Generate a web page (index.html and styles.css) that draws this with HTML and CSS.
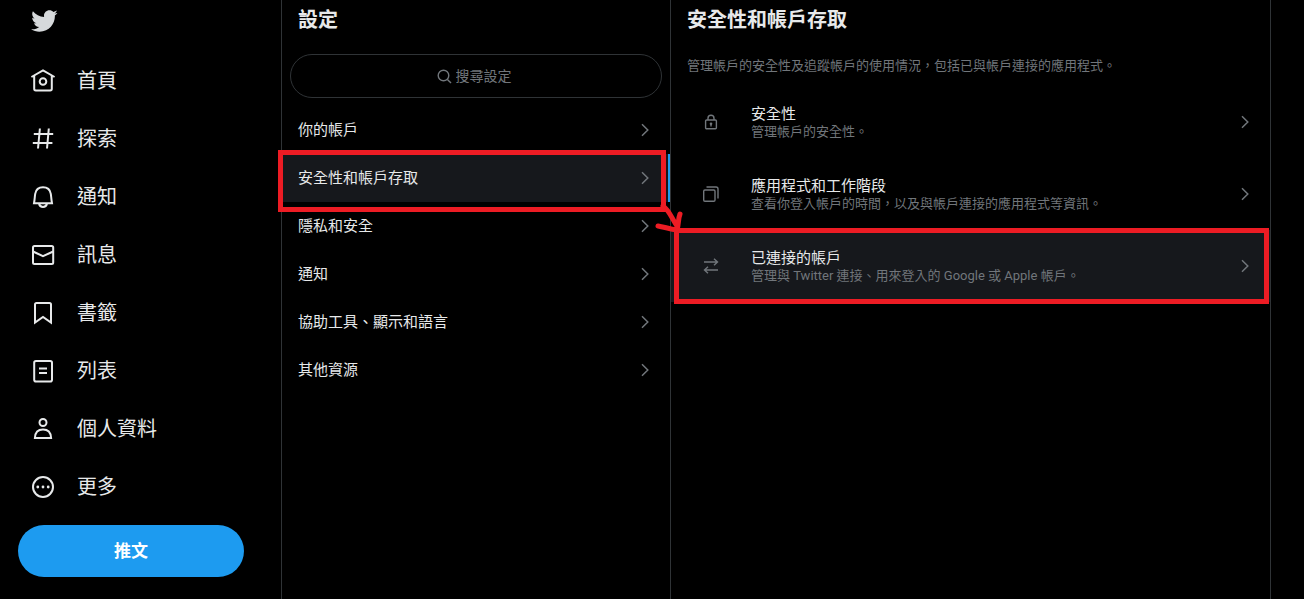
FILE: index.html
```html
<!DOCTYPE html>
<html lang="zh-Hant">
<head>
<meta charset="utf-8">
<meta name="viewport" content="width=device-width, initial-scale=1">
<title>設定</title>
<link rel="stylesheet" href="styles.css">
</head>
<body>
<svg class="sprite" aria-hidden="true">
  <symbol id="chevron" viewBox="0 0 18 18"><path d="M6 3.2 11.8 9 6 14.8"/></symbol>
</svg>
<div class="layout">
  <header class="sidebar">
    <a class="logo" href="#" aria-label="Twitter">
      <svg viewBox="0 0 24 24"><path d="M23.643 4.937c-.835.37-1.732.62-2.675.733.962-.576 1.7-1.49 2.048-2.578-.9.534-1.897.922-2.958 1.13-.85-.904-2.06-1.47-3.4-1.47-2.572 0-4.658 2.086-4.658 4.66 0 .364.042.718.12 1.06-3.873-.195-7.304-2.05-9.602-4.868-.4.69-.63 1.49-.63 2.342 0 1.616.823 3.043 2.072 3.878-.764-.025-1.482-.234-2.11-.583v.06c0 2.257 1.605 4.14 3.737 4.568-.392.106-.803.162-1.227.162-.3 0-.593-.028-.877-.082.593 1.85 2.313 3.198 4.352 3.234-1.595 1.25-3.604 1.995-5.786 1.995-.376 0-.747-.022-1.112-.065 2.062 1.323 4.51 2.093 7.14 2.093 8.57 0 13.255-7.098 13.255-13.254 0-.2-.005-.402-.014-.602.91-.658 1.7-1.477 2.323-2.41z"/></svg>
    </a>
    <nav class="nav">
      <a href="#"><svg viewBox="0 0 26 26"><path d="M1.4 9 13 2.500 24.600 9M4.200 8V20.800q0 1.600 1.600 1.600H20.200q1.600 0 1.600-1.600V8"/><circle cx="13" cy="13.500" r="3.300"/></svg>首頁</a>
      <a href="#"><svg viewBox="0 0 26 26"><path d="M9.900 2.500 8 22.500M18.800 2.500 17 22.500M3.800 8H23.200M2.800 17H22.400"/></svg>探索</a>
      <a href="#"><svg viewBox="0 0 26 26"><path d="M4 19.200C4.800 15 4.700 13 5.200 9.800 5.900 5.800 9 3.300 13 3.300s7.100 2.500 7.800 6.500C21.300 13 21.200 15 22 19.200ZM9 19.500c.5 2.400 2 3.600 4 3.600s3.500-1.200 4-3.600"/></svg>通知</a>
      <a href="#"><svg viewBox="0 0 26 26"><rect x="3" y="4" width="20.200" height="18" rx="1.500"/><path d="M3 9.500 13 14.200 23.200 9.500"/></svg>訊息</a>
      <a href="#"><svg viewBox="0 0 26 26"><path d="M5 22.600V4.500Q5 3 6.500 3h13Q21 3 21 4.500V22.600L13 17Z"/></svg>書籤</a>
      <a href="#"><svg viewBox="0 0 26 26"><rect x="4.200" y="3" width="17.800" height="20.500" rx="1.800"/><path d="M9 10.500h8M9 15h8"/></svg>列表</a>
      <a href="#"><svg viewBox="0 0 26 26"><circle cx="13" cy="6.500" r="3.500"/><path d="M4.900 22c.3-5.600 3.300-8.400 8.100-8.400s7.800 2.800 8.100 8.400Z"/></svg>個人資料</a>
      <a href="#"><svg viewBox="0 0 26 26"><circle cx="13" cy="13" r="10"/><g class="dots"><circle cx="7.800" cy="13" r="1.400"/><circle cx="13" cy="13" r="1.400"/><circle cx="18.200" cy="13" r="1.400"/></g></svg>更多</a>
    </nav>
    <button class="tweet" type="button">推文</button>
  </header>

  <section class="settings">
    <h2>設定</h2>
    <label class="search">
      <svg viewBox="0 0 15 15" aria-hidden="true"><circle cx="6.500" cy="6.500" r="5.300"/><path d="M10.400 10.400 14 14"/></svg>
      <input type="text" placeholder="搜尋設定" aria-label="搜尋設定">
    </label>
    <nav class="menu">
      <a href="#">你的帳戶<svg class="chevron"><use href="#chevron"/></svg></a>
      <a href="#" class="active" aria-current="page">安全性和帳戶存取<svg class="chevron"><use href="#chevron"/></svg>
        <span class="mark mark-menu"></span>
        <svg class="arrow" viewBox="0 0 32 32" aria-hidden="true"><path d="M9 4C15 8 17 15 23 24M26 12C24 17 25 21 23 28M4 24C10 25 16 27 23 28"/></svg>
      </a>
      <a href="#">隱私和安全<svg class="chevron"><use href="#chevron"/></svg></a>
      <a href="#">通知<svg class="chevron"><use href="#chevron"/></svg></a>
      <a href="#">協助工具、顯示和語言<svg class="chevron"><use href="#chevron"/></svg></a>
      <a href="#">其他資源<svg class="chevron"><use href="#chevron"/></svg></a>
    </nav>
  </section>

  <main class="detail">
    <h2>安全性和帳戶存取</h2>
    <p class="intro">管理帳戶的安全性及追蹤帳戶的使用情況，包括已與帳戶連接的應用程式。</p>
    <a class="option" href="#">
      <svg class="icon" viewBox="0 0 18 18"><rect x="3.600" y="7" width="10.800" height="8.800" rx="1"/><path d="M6 7V5.200a3 3 0 0 1 6 0V7M9 11v2.500"/><circle class="solid" cx="9" cy="10.700" r="1.300"/></svg>
      <span class="text"><span class="name">安全性</span><span class="note">管理帳戶的安全性。</span></span>
      <svg class="chevron"><use href="#chevron"/></svg>
    </a>
    <a class="option" href="#">
      <svg class="icon" viewBox="0 0 18 18"><rect x="1.700" y="5" width="11.300" height="11.300" rx="1.200"/><path d="M4.500 2H14q2 0 2 2v9.500"/></svg>
      <span class="text"><span class="name">應用程式和工作階段</span><span class="note">查看你登入帳戶的時間，以及與帳戶連接的應用程式等資訊。</span></span>
      <svg class="chevron"><use href="#chevron"/></svg>
    </a>
    <a class="option active" href="#">
      <svg class="icon" viewBox="0 0 18 18"><path d="M2 5H15.500M12 1.800 15.500 5 12 8.200M16 13H2.500M6 9.800 2.500 13 6 16.200"/></svg>
      <span class="text"><span class="name">已連接的帳戶</span><span class="note">管理與 Twitter 連接、用來登入的 Google 或 Apple 帳戶。</span></span>
      <svg class="chevron"><use href="#chevron"/></svg>
      <span class="mark mark-option"></span>
    </a>
  </main>
</div>
</body>
</html>
```

FILE: styles.css
```css
* { box-sizing: border-box; }

body {
  margin: 0;
  background: #000;
  color: #e7e9ea;
  font-family: Roboto, "Noto Sans CJK TC", sans-serif;
  font-size: 15px;
  line-height: 20px;
}

a { color: inherit; text-decoration: none; }

svg { flex: none; fill: none; stroke: currentColor; }

h2 { margin: 0; padding: 0 16px; font-size: 20px; line-height: 24px; font-weight: 700; }

.sprite { display: none; }

.layout {
  display: grid;
  grid-template-columns: minmax(0, 282fr) minmax(0, 389fr) minmax(0, 600fr) minmax(0, 33fr);
  min-height: 100vh;
}

.sidebar, .settings, .detail { border-right: 1px solid #2f3336; }

/* Primary navigation */
.sidebar { padding: 7px 37px 0 18px; }
.logo { display: flex; padding-left: 12px; color: #d6d9db; }
.logo svg { width: 28px; height: 28px; fill: currentColor; stroke: none; }
.nav { display: flex; flex-direction: column; margin-top: 17px; }
.nav a {
  display: flex;
  align-items: center;
  gap: 21px;
  height: 58px;
  padding-left: 12px;
  font-size: 20px;
  line-height: 24px;
}
.nav svg { width: 26px; height: 26px; stroke-width: 2; }
.nav .dots { fill: currentColor; stroke: none; }

.tweet {
  display: block;
  width: 100%;
  height: 52px;
  margin-top: 9px;
  border: 0;
  border-radius: 26px;
  background: #1d9bf0;
  color: #fff;
  font: inherit;
  font-size: 17px;
  font-weight: 700;
}

/* Settings list */
.settings { padding-top: 8px; }
.search {
  display: flex;
  align-items: center;
  justify-content: center;
  gap: 4px;
  height: 44px;
  margin: 22px 8px 8px;
  border: 1px solid #2f3336;
  border-radius: 22px;
  color: #71767b;
}
.search svg { width: 15px; height: 15px; stroke-width: 1.4; }
.search input {
  width: 60px;
  padding: 0;
  border: 0;
  outline: 0;
  background: transparent;
  color: #e7e9ea;
  font: inherit;
  font-size: 14px;
}
.search input::placeholder { color: #71767b; opacity: 1; }

.menu a {
  position: relative;
  display: flex;
  align-items: center;
  justify-content: space-between;
  height: 48px;
  padding: 0 16px;
}
.menu .active { border-right: 2px solid #1d9bf0; padding-right: 14px; }
.active { background: #16181c; }

.chevron { width: 18px; height: 18px; color: #71767b; stroke-width: 1.5; }

/* Detail column */
.detail { padding-top: 8px; }
.intro {
  margin: 26px 16px 12px;
  color: #71767b;
  font-size: 13px;
  line-height: 16px;
}
.option {
  position: relative;
  display: flex;
  align-items: center;
  gap: 16px;
  min-height: 72px;
  padding: 0 16px;
}
.icon { width: 18px; height: 18px; margin: 0 15px; color: #71767b; stroke-width: 1.4; }
.solid { fill: currentColor; stroke: none; }
.text { display: flex; flex: 1; flex-direction: column; }
.note { color: #71767b; font-size: 13px; line-height: 16px; }

/* Highlight annotations drawn over the lists */
.mark { position: absolute; z-index: 1; border: 5px solid #ed1c24; pointer-events: none; }
.mark-menu { inset: -4px 2px -10px -4px; }
.mark-option { inset: -2px 1px -2px 3px; }
.menu .arrow {
  position: absolute;
  z-index: 2;
  top: 48px;
  right: -18px;
  width: 32px;
  height: 32px;
  color: #ed1c24;
  stroke-width: 5;
  stroke-linecap: round;
}
```
